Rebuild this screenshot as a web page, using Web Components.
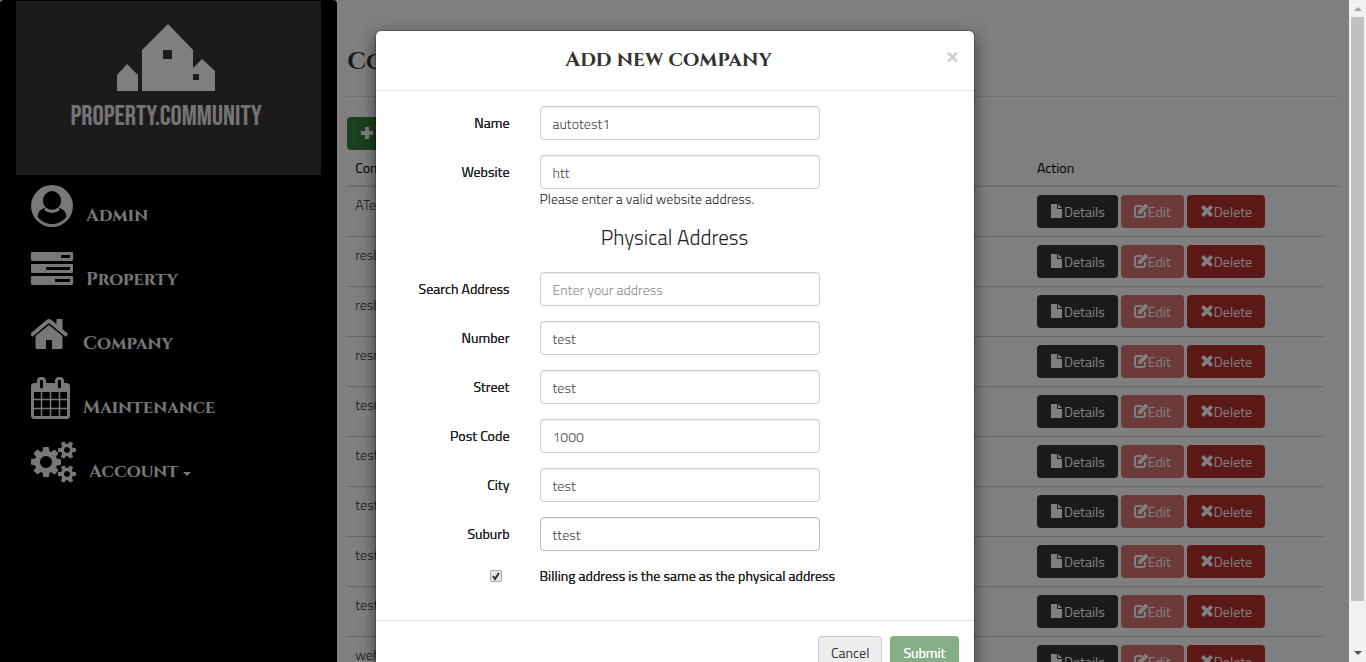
<!DOCTYPE html>
<html lang="en">
<head>
<meta charset="utf-8">
<title>Property Community - Companies</title>
<style>
  html, body { margin: 0; height: 100%; overflow: hidden; background: #fff; }
  body { font: 300 14px/20px "Titillium Web", Lato, "Open Sans", sans-serif; color: #333; }
</style>
</head>
<body>
<property-app></property-app>

<script>
const define = (name, html, setup) => {
  const tpl = document.createElement('template');
  tpl.innerHTML = html;
  customElements.define(name, class extends HTMLElement {
    constructor() {
      super();
      this.attachShadow({ mode: 'open' }).append(tpl.content.cloneNode(true));
    }
    connectedCallback() { if (setup) setup(this, this.shadowRoot); }
  });
};

const glyphs = {
  user: ['0 0 42 42', 42, 42, '<path fill-rule="evenodd" d="M21 0a21 21 0 1 1 0 42a21 21 0 0 1 0-42zM21 6a9 9.500 0 0 0-9 9.500c0 3 1.200 5.600 3 7.300c-5.500 1-8 4.200-8.500 9.200c4 4.600 8.700 7 14.500 7s10.500-2.400 14.500-7c-.5-5-3-8.200-8.500-9.200c1.800-1.700 3-4.300 3-7.300a9 9.500 0 0 0-9-9.500z"/><path fill-rule="evenodd" d="M15 22.500a9 9 0 0 0 12 0l2 2.500a12 12 0 0 1-16 0z"/>'],
  tasks: ['0 0 42 42', 42, 42, '<path fill-rule="evenodd" d="M1 3h40a1 1 0 0 1 1 1v7a1 1 0 0 1-1 1H1a1 1 0 0 1-1-1V4a1 1 0 0 1 1-1zm29 3v3h9V6zM1 15h40a1 1 0 0 1 1 1v7a1 1 0 0 1-1 1H1a1 1 0 0 1-1-1v-7a1 1 0 0 1 1-1zm14 3v3h24v-3zM1 27h40a1 1 0 0 1 1 1v7a1 1 0 0 1-1 1H1a1 1 0 0 1-1-1v-7a1 1 0 0 1 1-1zm23 3v3h15v-3z"/>'],
  home: ['64 0 1664 1792', 39, 42, '<path d="M1408 992v480q0 26-19 45t-45 19h-384v-384h-256v384h-384q-26 0-45-19t-19-45v-480q0-1 .5-3t.5-3l575-474 575 474q1 2 1 6zm223-69l-62 74q-8 9-21 11h-3q-13 0-21-7l-692-577-692 577q-12 8-24 7-13-2-21-11l-62-74q-8-10-7-23.500t11-21.500l719-599q32-26 76-26t76 26l244 204v-195q0-14 9-23t23-9h192q14 0 23 9t9 23v408l219 182q10 8 11 21.500t-7 23.500z"/>'],
  calendar: ['64 0 1664 1792', 39, 42, '<path d="M192 1664h288v-288h-288v288zm352 0h320v-288h-320v288zm-352-352h288v-320h-288v320zm352 0h320v-320h-320v320zm-352-384h288v-288h-288v288zm736 736h320v-288h-320v288zm-384-736h320v-288h-320v288zm768 736h288v-288h-288v288zm-384-352h320v-320h-320v320zm-352-864v-288q0-13-9.500-22.500t-22.500-9.500h-64q-13 0-22.500 9.500t-9.500 22.500v288q0 13 9.500 22.500t22.500 9.500h64q13 0 22.500-9.500t9.500-22.500zm736 864h288v-320h-288v320zm-384-384h320v-288h-320v288zm384 0h288v-288h-288v288zm32-480v-288q0-13-9.500-22.500t-22.500-9.500h-64q-13 0-22.500 9.500t-9.500 22.500v288q0 13 9.500 22.500t22.500 9.500h64q13 0 22.500-9.500t9.500-22.500zm384-64v1280q0 52-38 90t-90 38h-1408q-52 0-90-38t-38-90v-1280q0-52 38-90t90-38h128v-96q0-66 47-113t113-47h64q66 0 113 47t47 113v96h384v-96q0-66 47-113t113-47h64q66 0 113 47t47 113v96h128q52 0 90 38t38 90z"/>'],
  cogs: ['0 0 1920 1792', 45, 42, '<path d="M896 896q0-106-75-181t-181-75-181 75-75 181 75 181 181 75 181-75 75-181zm768 512q0-52-38-90t-90-38-90 38-38 90q0 53 37.500 90.500t90.500 37.500 90.500-37.500 37.500-90.500zm0-1024q0-52-38-90t-90-38-90 38-38 90q0 53 37.500 90.500t90.500 37.500 90.500-37.500 37.500-90.500zm-384 421v185q0 10-7 19.500t-16 10.500l-155 24q-11 35-32 76 34 48 90 115 7 11 7 20 0 12-7 19-23 30-82.500 89.500t-78.500 59.500q-11 0-21-7l-115-90q-37 19-77 31-11 108-23 155-7 24-30 24h-186q-11 0-20-7.500t-10-17.500l-23-153q-34-10-75-31l-118 89q-7 7-20 7-11 0-21-8-144-133-144-160 0-9 7-19 10-14 41-53t47-61q-23-44-35-82l-152-24q-10-1-17-9.500t-7-19.500v-185q0-10 7-19.500t16-10.500l155-24q11-35 32-76-34-48-90-115-7-11-7-20 0-12 7-20 22-30 82-89t79-59q11 0 21 7l115 90q34-18 77-32 11-108 23-154 7-24 30-24h186q11 0 20 7.500t10 17.500l23 153q34 10 75 31l118-89q8-7 20-7 11 0 21 8 144 133 144 160 0 8-7 19-12 16-42 54t-45 60q23 48 34 82l152 23q10 2 17 10.500t7 19.500zm640 533v140q0 16-149 31-12 27-30 52 51 113 51 138 0 4-4 7-122 71-124 71-8 0-46-47t-52-68q-20 2-30 2t-30-2q-14 21-52 68t-46 47q-2 0-124-71-4-3-4-7 0-25 51-138-18-25-30-52-149-15-149-31v-140q0-16 149-31 13-29 30-52-51-113-51-138 0-4 4-7 4-2 35-20t59-34 30-16q8 0 46 46.500t52 67.500q20-2 30-2t30 2q51-71 92-112l6-2q4 0 124 70 4 3 4 7 0 25-51 138 17 23 30 52 149 15 149 31zm0-1024v140q0 16-149 31-12 27-30 52 51 113 51 138 0 4-4 7-122 71-124 71-8 0-46-47t-52-68q-20 2-30 2t-30-2q-14 21-52 68t-46 47q-2 0-124-71-4-3-4-7 0-25 51-138-18-25-30-52-149-15-149-31v-140q0-16 149-31 13-29 30-52-51-113-51-138 0-4 4-7 4-2 35-20t59-34 30-16q8 0 46 46.500t52 67.500q20-2 30-2t30 2q51-71 92-112l6-2q4 0 124 70 4 3 4 7 0 25-51 138 17 23 30 52 149 15 149 31z"/>'],
  file: ['0 0 14 14', 14, 14, '<path d="M1 0h6v5h5v9H1z"/><path d="M8 0l4 4H8z"/>'],
  edit: ['0 0 14 14', 14, 14, '<path fill="none" stroke="currentColor" stroke-width="2" d="M8 2H3Q1 2 1 4v7q0 2 2 2h6q2 0 2-2V8"/><path d="M4 10V7l6-6 3 3-6 6zM11 0h1l2 2v1l-1 1-3-3z"/>'],
  remove: ['0 0 14 14', 14, 14, '<path d="M3.500 1L7 4.300 10.500 1 13 3.500 9.700 7l3.300 3.500-2.500 2.500L7 9.700 3.500 13 1 10.500 4.300 7 1 3.500z"/>'],
  plus: ['0 0 14 14', 14, 14, '<path d="M5 1h4v4h4v4H9v4H5V9H1V5h4z"/>'],
};

define('app-icon', `
  <style>
    :host { display: block; flex: none; }
    svg { display: block; fill: currentColor; }
  </style>
  <svg aria-hidden="true"></svg>`,
  (host, root) => {
    const [box, w, h, body] = glyphs[host.getAttribute('name')];
    const svg = root.querySelector('svg');
    svg.setAttribute('viewBox', box);
    svg.setAttribute('width', w);
    svg.setAttribute('height', h);
    svg.setAttribute('preserveAspectRatio', 'none');
    svg.innerHTML = body;
  });

define('app-button', `
  <style>
    :host { display: inline-block; }
    button {
      display: flex; align-items: center; box-sizing: border-box; height: 33px;
      margin: 0; padding: 0 12px; border: 1px solid transparent; border-radius: 4px;
      font: inherit; font-weight: 400; color: #fff; white-space: nowrap;
    }
    :host([kind=dark]) button { background: #353535; }
    :host([kind=red]) button { background: #b82f2f; }
    :host([kind=rose]) button { background: #c82c30; opacity: .65; }
    :host([kind=green]) button { background: #37803a; }
    :host([kind=submit]) button { background: #468548; opacity: .65; height: 34px; text-shadow: 0 0 #fff; }
    :host([kind=plain]) button { background: #eee; color: #333; border-color: #ccc; height: 34px; }
    app-icon { margin-top: -2px; }
  </style>
  <button type="button"><slot></slot></button>`,
  (host, root) => {
    const btn = root.querySelector('button');
    btn.disabled = host.hasAttribute('disabled');
    if (host.hasAttribute('icon') && !root.querySelector('app-icon')) {
      const icon = document.createElement('app-icon');
      icon.setAttribute('name', host.getAttribute('icon'));
      btn.prepend(icon);
    }
  });

define('brand-logo', `
  <style>
    :host {
      display: flex; flex-direction: column; align-items: center; box-sizing: border-box;
      height: 174px; margin: 1px 16px 0 16px; padding: 23px 5px 0 0; background: #383536; color: #fff;
    }
    svg { display: block; fill: currentColor; }
    span { margin-top: 10px; font: 300 28px/32px "Bebas Neue", "Liberation Sans Narrow", Roboto, sans-serif; color: #e8e8e8; }
  </style>
  <svg width="98" height="67" viewBox="0 0 98 67" aria-hidden="true">
    <path fill-rule="evenodd" d="M0 67V51l10-11 11 11v16zM25 67V26L51 0l25 26v18l9-9 13 12v20zM46 26v9h9v-9zM76 50v6h6v-6z"/>
  </svg>
  <span>PROPERTY.COMMUNITY</span>`);

define('nav-item', `
  <style>
    :host { display: block; color: #f0f0f0; }
    a { display: flex; gap: 13px; align-items: flex-end; color: inherit; text-decoration: none; height: 42px; }
    .text { display: block; font: bold 18px/22px Cinzel, "Liberation Serif", serif; }
    .caret { display: none; margin: 0 0 7px -8px; border: 4px solid transparent; border-top-color: currentColor; border-bottom: 0; }
    :host([dropdown]) .caret { display: block; }
  </style>
  <a href="#"><span class="text"></span><i class="caret"></i></a>`,
  (host, root) => {
    root.querySelector('.text').textContent = host.getAttribute('label');
    if (root.querySelector('app-icon')) return;
    const icon = document.createElement('app-icon');
    icon.setAttribute('name', host.getAttribute('icon'));
    root.querySelector('a').prepend(icon);
  });

define('side-nav', `
  <style>
    :host { display: block; background: #000; border-radius: 4px 4px 0 0; }
    nav { display: flex; flex-direction: column; gap: 22px; padding: 10px 31px; }
  </style>
  <brand-logo></brand-logo>
  <nav>
    <nav-item icon="user" label="Admin"></nav-item>
    <nav-item icon="tasks" label="Property"></nav-item>
    <nav-item icon="home" label="Company"></nav-item>
    <nav-item icon="calendar" label="Maintenance"></nav-item>
    <nav-item icon="cogs" label="Account" dropdown></nav-item>
  </nav>`);

define('company-table', `
  <style>
    :host { display: block; }
    table, thead, tbody { display: block; }
    tr { display: grid; grid-template-columns: 1fr 294px; }
    th, td { padding: 8px; text-align: left; }
    thead tr { padding-right: 16px; border-bottom: 2px solid #ddd; }
    th { font-weight: 400; color: #000; line-height: 19px; }
    tbody { margin-right: 16px; }
    tbody tr + tr { border-top: 1px solid #ccc; }
    .actions { display: flex; gap: 3px; }
  </style>
  <table>
    <thead><tr><th>Company</th><th>Action</th></tr></thead>
    <tbody></tbody>
  </table>`,
  (host, root) => {
    const names = ['ATest', 'resbc', 'resbd', 'resm', 'tes0', 'test', 'test', 'test', 'test', 'wef'];
    root.querySelector('tbody').innerHTML = names.map(n => `
      <tr><td>${n}</td><td class="actions">
        <app-button kind="dark" icon="file">Details</app-button>
        <app-button kind="rose" icon="edit" disabled>Edit</app-button>
        <app-button kind="red" icon="remove">Delete</app-button>
      </td></tr>`).join('');
  });

define('company-page', `
  <style>
    :host { display: block; padding: 0 10px; }
    h1 {
      margin: 0 0 20px; padding: 44px 0 16px; border-bottom: 1px solid #e0e0e0;
      font: bold 24px/36px Cinzel, "Liberation Serif", serif; color: #333;
    }
    app-button { display: block; width: max-content; }
  </style>
  <h1>Companies</h1>
  <app-button kind="green" icon="plus" aria-label="Add new company"></app-button>
  <company-table></company-table>`);

define('form-field', `
  <style>
    :host { display: grid; grid-template-columns: 119px 1fr; gap: 0 30px; }
    label { padding-top: 7px; text-align: right; font-weight: 400; color: #222; text-shadow: 0 0 #222; }
    input {
      box-sizing: border-box; width: 100%; max-width: 280px; height: 34px; padding: 1px 12px 0;
      border: 1px solid #ccc; border-radius: 4px; background: #fff;
      box-shadow: inset 0 1px 1px rgba(0,0,0,.075);
      font: inherit; color: #444; display: block;
    }
    input::placeholder { color: #888; opacity: 1; }
    :host([active]) input { border-color: #a9c0d6; }
    .hint { grid-column: 2; color: #222; }
    .hint:empty { display: none; }
  </style>
  <label for="field"></label>
  <input id="field" type="text">
  <span class="hint"></span>`,
  (host, root) => {
    root.querySelector('label').textContent = host.getAttribute('label');
    const input = root.querySelector('input');
    input.value = host.getAttribute('value') || '';
    input.placeholder = host.getAttribute('placeholder') || '';
    root.querySelector('.hint').textContent = host.getAttribute('hint') || '';
  });

define('company-modal', `
  <style>
    :host {
      display: block; box-sizing: border-box; width: 600px; max-width: 100%; margin: 30px auto;
      background: #fff; border: 1px solid rgba(0,0,0,.2); border-radius: 6px; background-clip: padding-box;
      box-shadow: 0 5px 15px rgba(0,0,0,.5);
    }
    header { display: grid; grid-template-columns: 24px 1fr 24px; align-items: start; padding: 15px 9px 16px; border-bottom: 1px solid #e5e5e5; }
    h2 { grid-column: 2; margin: 0; padding-right: 12px; text-align: center; font: bold 21px/28px Cinzel, "Liberation Serif", serif; color: #333; }
    .close { margin: 0; padding: 0; border: 0; background: none; font: bold 21px/21px "Liberation Sans", sans-serif; color: #ccc; }
    form { display: grid; gap: 15px; padding: 15px; }
    h3 { margin: 1px 0 8px; font-size: 21px; line-height: 24px; font-weight: 300; text-align: center; color: #222; }
    .check { display: grid; grid-template-columns: 119px 1fr; gap: 0 30px; align-items: center; padding-bottom: 19px; }
    .check label { font-weight: 400; color: #222; text-shadow: 0 0 #222; }
    .check input {
      appearance: none; box-sizing: border-box; justify-self: end; width: 12px; height: 12px; margin: 0 8px 0 0;
      border: 1px solid #aaa; border-radius: 2px;
      background: #e8e8e8 url("data:image/svg+xml,%3Csvg xmlns='http://www.w3.org/2000/svg' viewBox='0 0 10 10'%3E%3Cpath d='M2 5l2 3 4-6' fill='none' stroke='%23333' stroke-width='2'/%3E%3C/svg%3E") center/10px 10px;
    }
    footer { display: flex; justify-content: flex-end; gap: 8px; padding: 15px; border-top: 1px solid #e5e5e5; }
  </style>
  <header>
    <h2>Add new company</h2>
    <button class="close" type="button" aria-label="Close">×</button>
  </header>
  <form>
    <form-field label="Name" value="autotest1"></form-field>
    <form-field label="Website" value="htt" hint="Please enter a valid website address."></form-field>
    <h3>Physical Address</h3>
    <form-field label="Search Address" placeholder="Enter your address"></form-field>
    <form-field label="Number" value="test"></form-field>
    <form-field label="Street" value="test"></form-field>
    <form-field label="Post Code" value="1000"></form-field>
    <form-field label="City" value="test"></form-field>
    <form-field label="Suburb" value="ttest" active></form-field>
    <div class="check">
      <input id="billing" type="checkbox" checked>
      <label for="billing">Billing address is the same as the physical address</label>
    </div>
  </form>
  <footer>
    <app-button kind="plain">Cancel</app-button>
    <app-button kind="submit" disabled>Submit</app-button>
  </footer>`);

define('scroll-strip', `
  <style>
    :host { display: grid; grid-template-rows: 17px 1fr 17px; justify-items: center; background: #f1f1f1; }
    .thumb { width: 13px; height: 93%; background: #c1c1c1; }
    svg { display: block; }
  </style>
  <svg width="17" height="17" aria-hidden="true"><path d="M5 11l4-4 4 4z" fill="#a3a3a3"/></svg>
  <div class="thumb"></div>
  <svg width="17" height="17" aria-hidden="true"><path d="M5 6h8l-4 4z" fill="#505050"/></svg>`);

define('property-app', `
  <style>
    :host { display: grid; grid-template-columns: 1fr 17px; height: 100vh; overflow: hidden; }
    .stage { position: relative; overflow: hidden; }
    .layout { display: grid; grid-template-columns: 1fr 3fr; min-height: 100%; }
    .backdrop { position: absolute; inset: 0; overflow: hidden; background: rgba(0,0,0,.5); }
  </style>
  <div class="stage">
    <div class="layout">
      <side-nav></side-nav>
      <company-page></company-page>
    </div>
    <div class="backdrop"><company-modal role="dialog" aria-label="Add new company"></company-modal></div>
  </div>
  <scroll-strip></scroll-strip>`);
</script>
</body>
</html>
